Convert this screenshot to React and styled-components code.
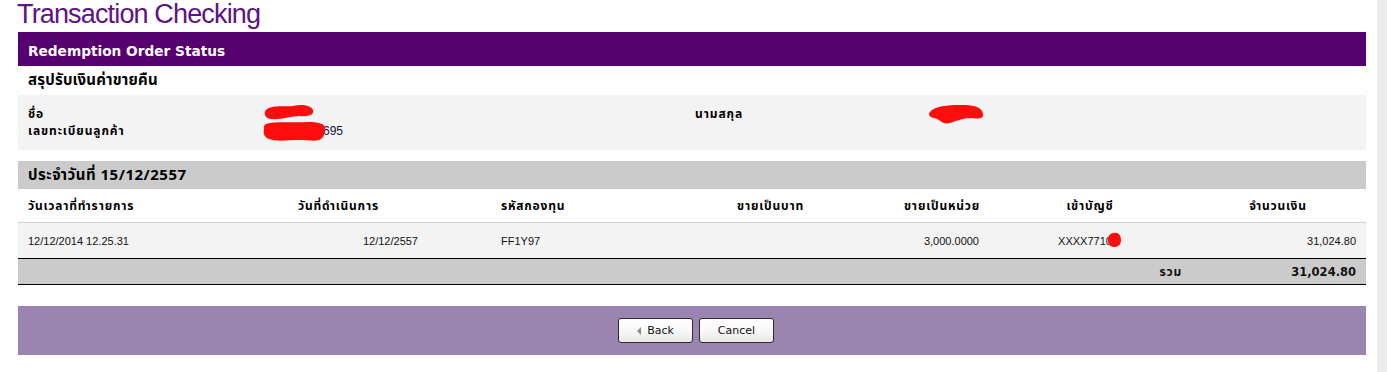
import React from "react";
import styled, { createGlobalStyle } from "styled-components";

const GlobalStyle = createGlobalStyle`
  body {
    margin: 0;
    background: #ffffff;
    font-family: "Liberation Sans", Arial, sans-serif;
    overflow: hidden;
  }
`;

const thai = `Tahoma, "Noto Sans Thai", "DejaVu Sans", "Noto Sans", sans-serif`;

const Page = styled.div`
  display: flex;
  height: 372px;
`;

const Main = styled.main`
  margin-left: 18px;
  width: 1348px;
`;

const ScrollTrack = styled.div`
  margin-left: auto;
  width: 10px;
  height: 100%;
  background: #ededed;
`;

const Title = styled.h1`
  margin: 0 0 4px -1px;
  height: 28px;
  font-family: "Liberation Sans", Arial, sans-serif;
  font-weight: normal;
  font-size: 27px;
  line-height: 28px;
  letter-spacing: -0.85px;
  color: #5e1384;
`;

const HeaderBar = styled.div`
  box-sizing: border-box;
  height: 34px;
  display: flex;
  align-items: center;
  padding: 3px 0 0 10px;
  background: #560070;
  color: #ffffff;
  font-family: "DejaVu Sans", Verdana, sans-serif;
  font-weight: bold;
  font-size: 13.7px;
`;

const SectionTitle = styled.div`
  height: ${(p) => p.$h || 29}px;
  display: flex;
  align-items: center;
  padding-left: 10px;
  font-family: ${thai};
  font-weight: bold;
  font-size: 15px;
  letter-spacing: ${(p) => p.$ls || 0.2}px;
  color: #000;
  background: ${(p) => p.$bg || "transparent"};
`;

const InfoBox = styled.div`
  background: #f3f3f3;
  padding: 10px 0 11px 10px;
  display: grid;
  grid-template-columns: 234px 433px 233px 1fr;
  grid-auto-rows: 17px;
  align-items: center;
  margin-bottom: 11px;
`;

const InfoLabel = styled.div`
  font-family: ${thai};
  font-weight: bold;
  font-size: 12px;
  letter-spacing: 0.9px;
  color: #000;
`;

const InfoValue = styled.div`
  position: relative;
  height: 100%;
  display: flex;
  align-items: center;
  font-family: "Liberation Sans", Arial, sans-serif;
  font-size: 12px;
  color: #16163a;
`;

const Scribble = styled.svg`
  position: absolute;
  left: ${(p) => p.$left || 0}px;
  top: ${(p) => p.$top || 0}px;
`;

const Table = styled.div`
  display: grid;
  grid-template-columns: 270px 203px 150px 173px 176px 200px 176px;
`;

const Cell = styled.div`
  position: relative;
  display: flex;
  align-items: center;
  justify-content: ${(p) =>
    p.$align === "right" ? "flex-end" : p.$align === "center" ? "center" : "flex-start"};
  padding: ${(p) =>
    p.$align === "right"
      ? `0 ${p.$pad ?? 10}px 0 0`
      : p.$align === "center"
      ? `0 ${p.$pad ?? 0}px 0 0`
      : `0 0 0 ${p.$pad ?? 10}px`};
`;

const HeadCell = styled(Cell)`
  height: 33px;
  border-bottom: 1px solid #cfcfcf;
  font-family: ${thai};
  font-weight: bold;
  font-size: 12px;
  letter-spacing: 0.8px;
  color: #000;
`;

const DataCell = styled(Cell)`
  height: 34px;
  padding-top: 1px;
  background: #f3f3f3;
  border-bottom: 1px solid #000;
  font-family: "Liberation Sans", Arial, sans-serif;
  font-size: 11px;
  color: #111;
`;

const TotalCell = styled(Cell)`
  height: 25px;
  background: #cbcbcb;
  border-bottom: 1px solid #000;
  font-family: ${(p) => (p.$num ? `"DejaVu Sans", Verdana, sans-serif` : thai)};
  font-weight: bold;
  font-size: ${(p) => (p.$num ? "11.5px" : "12px")};
  letter-spacing: ${(p) => (p.$num ? 0 : 0.8)}px;
  color: #111;
`;

const Footer = styled.div`
  margin-top: 21px;
  height: 49px;
  background: #9a84b0;
  display: flex;
  align-items: center;
  justify-content: center;
  gap: 6px;
  padding-left: 8px;
`;

const Button = styled.button`
  width: 75px;
  height: 25px;
  display: flex;
  align-items: center;
  justify-content: center;
  gap: 6px;
  border: 1px solid #2e2e2e;
  border-radius: 3px;
  background: linear-gradient(#ffffff 0%, #f7f7f7 55%, #e6e6e6 100%);
  font-family: "DejaVu Sans", Tahoma, sans-serif;
  font-size: 11px;
  color: #111;
  padding: 0;
`;

const Arrow = styled.span`
  width: 0;
  height: 0;
  border-top: 4px solid transparent;
  border-bottom: 4px solid transparent;
  border-right: 4px solid #8a8a8a;
`;

function Blob({ left, top, w, h, d }) {
  return (
    <Scribble $left={left} $top={top} width={w} height={h} viewBox={`0 0 ${w} ${h}`}>
      <path d={d} fill="#ff0d0d" />
    </Scribble>
  );
}

export default function App() {
  return (
    <>
      <GlobalStyle />
      <Page>
        <Main>
          <Title>Transaction Checking</Title>
          <HeaderBar>Redemption Order Status</HeaderBar>
          <SectionTitle>สรุปรับเงินค่าขายคืน</SectionTitle>
          <InfoBox>
            <InfoLabel>ชื่อ</InfoLabel>
            <InfoValue>
              <Blob
                left={1}
                top={-1}
                w={52}
                h={18}
                d="M4 5 C10 1 22 3 30 2 C38 0 48 1 50 6 C52 11 44 13 36 12 C28 12 18 16 8 15 C1 14 0 8 4 5 Z"
              />
            </InfoValue>
            <InfoLabel>นามสกุล</InfoLabel>
            <InfoValue>
              <Blob
                left={0}
                top={-2}
                w={56}
                h={22}
                d="M2 9 C6 3 20 2 32 2 C44 2 54 3 55 11 C56 16 50 16 44 15 C36 15 30 17 22 20 C14 22 12 16 6 15 C1 14 0 11 2 9 Z"
              />
            </InfoValue>
            <InfoLabel>เลขทะเบียนลูกค้า</InfoLabel>
            <InfoValue>
              <span style={{ paddingLeft: 61 }}>695</span>
              <Blob
                left={1}
                top={-3}
                w={64}
                h={24}
                d="M3 5 C12 2 30 4 46 3 C56 3 63 5 62 10 C61 14 62 17 58 20 C54 23 46 21 36 21 C26 21 14 23 6 20 C1 18 0 14 1 10 C1 7 1 6 3 5 Z"
              />
            </InfoValue>
          </InfoBox>
          <SectionTitle $bg="#cbcbcb" $h={28} $ls={0.5}>
            ประจำวันที่ 15/12/2557
          </SectionTitle>
          <Table>
            <HeadCell>วันเวลาที่ทำรายการ</HeadCell>
            <HeadCell>วันที่ดำเนินการ</HeadCell>
            <HeadCell>รหัสกองทุน</HeadCell>
            <HeadCell $align="right">ขายเป็นบาท</HeadCell>
            <HeadCell $align="right">ขายเป็นหน่วย</HeadCell>
            <HeadCell $align="center">เข้าบัญชี</HeadCell>
            <HeadCell $align="center">จำนวนเงิน</HeadCell>

            <DataCell>12/12/2014 12.25.31</DataCell>
            <DataCell $align="right" $pad={73}>12/12/2557</DataCell>
            <DataCell>FF1Y97</DataCell>
            <DataCell />
            <DataCell $align="right" $pad={11}>3,000.0000</DataCell>
            <DataCell $align="center" $pad={10}>
              <span style={{ position: "relative" }}>
                XXXX7710
                <Blob
                  left={50}
                  top={-3}
                  w={14}
                  h={16}
                  d="M6 1 C10 0 13 3 13 8 C13 13 10 15 6 15 C2 15 0 12 0 8 C0 4 2 1 6 1 Z"
                />
              </span>
            </DataCell>
            <DataCell $align="right" $pad={10}>31,024.80</DataCell>

            <TotalCell />
            <TotalCell />
            <TotalCell />
            <TotalCell />
            <TotalCell />
            <TotalCell $align="right" $pad={8}>รวม</TotalCell>
            <TotalCell $align="right" $pad={10} $num>31,024.80</TotalCell>
          </Table>
          <Footer>
            <Button>
              <Arrow />
              Back
            </Button>
            <Button>Cancel</Button>
          </Footer>
        </Main>
        <ScrollTrack />
      </Page>
    </>
  );
}
